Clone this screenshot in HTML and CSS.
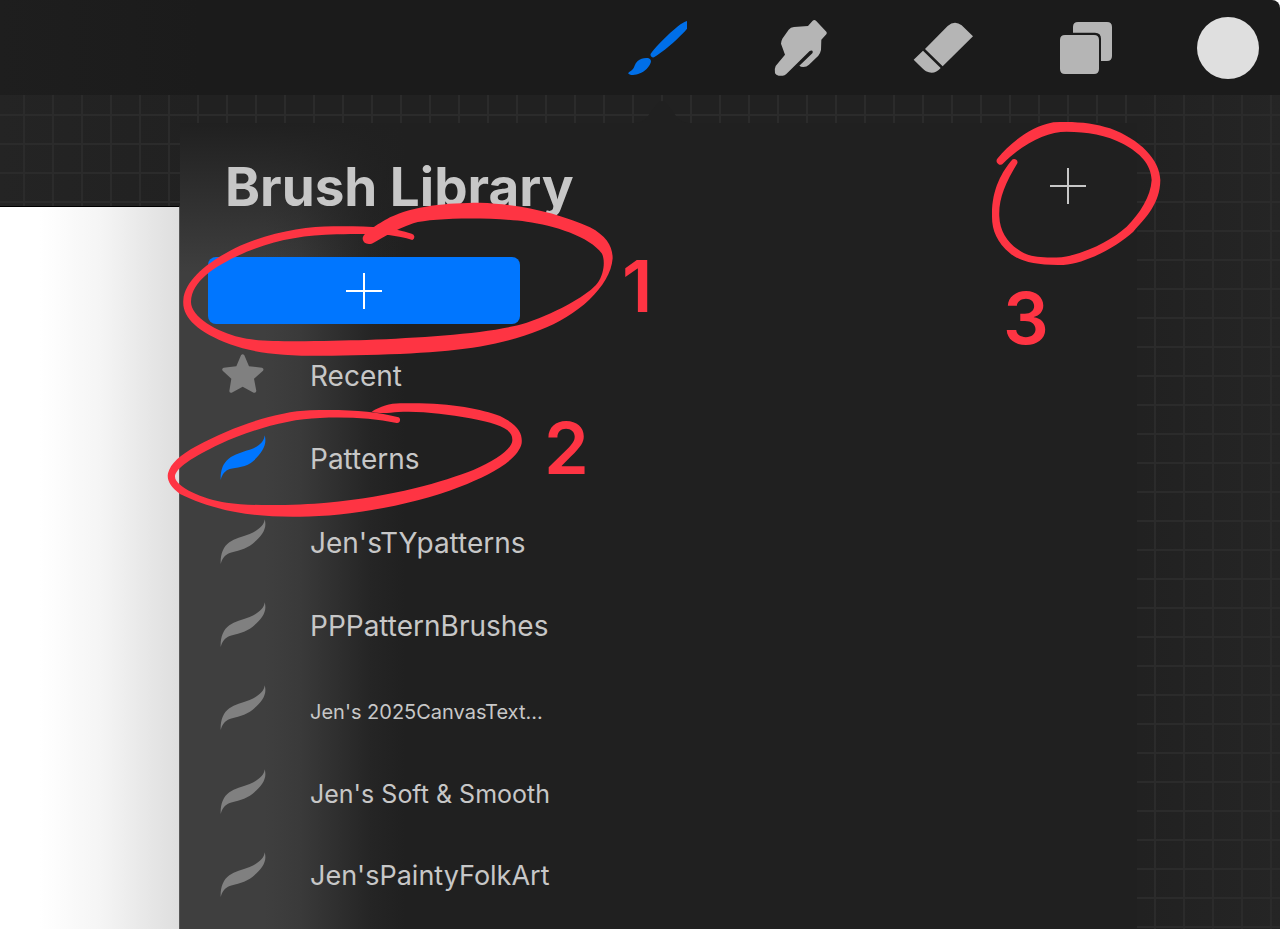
FILE: index.html
```html
<!DOCTYPE html>
<html lang="en">
<head>
<meta charset="utf-8">
<title>Brush Library</title>
<link rel="stylesheet" href="styles.css">
</head>
<body>
<svg class="defs" aria-hidden="true">
  <symbol id="stroke" viewBox="43 30 144 138">
    <path d="M180 31C179 48 162 64 135 75C112 83 90 89 74 100C56 113 47 135 48 165C53 147 61 138 75 132C95 126 123 121 144 104C173 81 188 58 180 31Z"/>
  </symbol>
  <symbol id="stroke-full" viewBox="43 30 144 138">
    <path d="M180 31C179 48 165 65 135 74C112 81 90 87 72 101C55 115 47 135 48 165C53 147 61 137 75 132C95 127 125 127 147 107C174 82 188 58 180 31Z"/>
  </symbol>
  <symbol id="plus" viewBox="0 0 36 36">
    <path d="M18 0V36M0 18H36" fill="none" stroke="currentColor" stroke-width="2"/>
  </symbol>
</svg>

<header class="toolbar">
  <button class="tool tool-active" aria-label="Paint">
    <svg viewBox="73 51 186 186"><path d="M266 62C270 72 262 84 250 97C222 126 188 155 160 172C152 173 148 168 150 161C170 134 203 102 230 80C246 68 258 62 266 62ZM140 174C148 175 153 180 150 188C145 202 133 213 118 220C104 226 90 226 83 221C82 217 89 215 94 210C103 202 101 192 111 183C119 176 130 173 140 174Z"/></svg>
  </button>
  <button class="tool" aria-label="Smudge">
    <svg viewBox="504 51 186 186"><path d="M638 62Q643 58 648 62L679 95Q682 99 679 103L664 119L663 150Q661 160 655 167L627 194Q620 201 610 201Q602 201 598 197L637 160Q640 155 637 152Q633 150 629 153L559 222Q554 227 548 227H536Q528 226 525 220Q522 208 527 198L555 164L543 131Q543 124 547 116L566 89Q572 82 582 81L624 78Z"/></svg>
  </button>
  <button class="tool" aria-label="Erase">
    <svg viewBox="93 51 186 186"><path d="M135 147L203 78Q224 59 245 76L279 109L188 199ZM129 152L182 204Q163 226 138 214Q132 210 101 179Z"/></svg>
  </button>
  <button class="tool" aria-label="Layers">
    <svg viewBox="522 51 186 186"><path d="M555 105H642Q657 105 657 120V207Q657 222 642 222H555Q540 222 540 207V120Q540 105 555 105ZM579 98V81Q579 66 594 66H681Q696 66 696 81V168Q696 183 681 183H663V116Q663 98 645 98Z"/></svg>
  </button>
  <button class="tool swatch" aria-label="Color"></button>
</header>

<main class="stage">
  <div class="paper"></div>
  <section class="library">
    <svg class="caret" viewBox="0 0 54 24" aria-hidden="true"><path d="M0 24Q8 24 13 17L23 4Q27 0 31 4L41 17Q46 24 54 24Z"/></svg>
    <div class="library-head">
      <h1>Brush Library</h1>
      <button class="add-brush" aria-label="New brush"><svg><use href="#plus"/></svg></button>
    </div>
    <button class="add-set" aria-label="New brush set"><svg><use href="#plus"/></svg></button>
    <ul class="sets">
      <li><button class="set"><svg class="star" viewBox="182 34 144 138"><path d="M248 44Q253 37 258 44L272 77L311 81Q318 84 314 90L287 114L294 151Q293 158 286 156L253 138L220 156Q213 158 213 151L219 114L193 90Q189 84 196 81L234 77Z"/></svg><span>Recent</span></button></li>
      <li><button class="set set-active"><svg><use href="#stroke-full"/></svg><span>Patterns</span></button></li>
      <li><button class="set"><svg><use href="#stroke"/></svg><span>Jen'sTYpatterns</span></button></li>
      <li><button class="set"><svg><use href="#stroke"/></svg><span>PPPatternBrushes</span></button></li>
      <li><button class="set set-small"><svg><use href="#stroke"/></svg><span>Jen's 2025CanvasText...</span></button></li>
      <li><button class="set set-medium"><svg><use href="#stroke"/></svg><span>Jen's Soft &amp; Smooth</span></button></li>
      <li><button class="set set-large"><svg><use href="#stroke"/></svg><span>Jen'sPaintyFolkArt</span></button></li>
    </ul>
  </section>
</main>

<svg class="marks marks-left" viewBox="0 0 660 560">
  <g transform="translate(160 130) scale(.33333)"><path d="M608 325C610 308 650 285 690 262C760 228 860 218 960 218C1080 222 1200 250 1290 292C1340 318 1358 350 1358 385C1352 470 1250 560 1140 600C1000 655 860 668 620 675C400 682 300 675 210 643C110 605 65 560 70 510C75 440 170 380 240 347C340 305 440 289 520 289C620 288 700 292 755 311A10 10 0 0 1 757 330C690 308 620 312 530 313C430 315 350 330 260 365C170 405 95 450 93 515C92 560 170 605 240 622C300 640 500 632 620 630C800 622 1000 610 1100 578C1200 545 1290 490 1312 460C1335 430 1335 385 1325 370C1290 320 1180 285 1100 275C1000 262 820 262 760 280C700 300 660 330 635 341C620 345 608 338 608 325Z"/></g>
  <g transform="translate(160 340) scale(.33333)"><path d="M635 215C660 200 690 190 720 190C860 186 960 205 1020 228C1075 255 1088 280 1085 310C1075 360 990 405 900 440C760 495 560 530 420 530C240 533 140 500 60 462C30 440 20 420 24 400C32 370 60 345 110 318C220 258 350 215 450 211C560 207 650 215 712 231A9 9 0 0 1 710 249C640 235 560 230 480 234C380 236 260 275 180 312C100 350 45 385 45 410C45 440 130 478 200 488C280 500 420 495 500 488C700 470 850 425 940 390C1010 360 1058 325 1057 300C1058 265 1010 250 930 235C860 222 780 212 715 216C690 218 660 222 635 215Z"/></g>
  <text x="622" y="312">1</text>
  <text x="544" y="474">2</text>
</svg>
<svg class="marks marks-right" viewBox="960 0 320 400">
  <g transform="translate(960 100) scale(.33333)"><path d="M113 175C150 130 210 80 280 67C340 63 400 68 450 85C540 118 600 180 601 240C600 310 560 350 520 395C470 440 380 490 310 495C230 497 180 485 150 460C110 425 95 390 96 345C95 270 125 215 158 178A10 10 0 0 1 172 190C135 250 115 300 118 350C120 400 150 440 200 463C230 475 300 475 330 467C410 445 460 415 500 380C540 340 572 290 575 240C572 190 540 160 490 132C440 105 380 95 320 95C260 95 190 130 130 190A11 11 0 0 1 113 175Z"/></g>
  <text x="1003" y="344">3</text>
</svg>
</body>
</html>
```
FILE: styles.css
```css
* {
  box-sizing: border-box;
}

body {
  margin: 0;
  min-height: 100vh;
  display: flex;
  flex-direction: column;
  position: relative;
  overflow-x: hidden;
  background: #fff;
  font-family: Inter, "Liberation Sans", sans-serif;
  color: #c7c7c7;
}

button {
  padding: 0;
  border: 0;
  background: none;
  color: inherit;
  font: inherit;
  cursor: pointer;
}

svg {
  display: block;
  fill: currentColor;
}

.defs {
  position: absolute;
  width: 0;
  height: 0;
}

.toolbar {
  display: flex;
  justify-content: flex-end;
  gap: 81px;
  height: 95px;
  padding: 17px 21px 0;
  background: linear-gradient(90deg, #1e1e1e, #1b1b1b 200px);
  border-top-right-radius: 8px;
}

.tool {
  width: 62px;
  height: 62px;
  color: #b5b5b5;
}

.tool-active {
  color: #006fe8;
}

.swatch {
  border-radius: 50%;
  background: #dfdfdf;
}

.stage {
  flex: 1;
  display: flex;
  padding-right: 143px;
  background:
    repeating-linear-gradient(90deg, #2b2b2b 0 2px, transparent 2px 29px),
    repeating-linear-gradient(180deg, #2b2b2b 0 2px, transparent 2px 29px),
    linear-gradient(90deg, #242424, #212121 200px, #212121 calc(100% - 140px), #252525);
  background-size: calc(100% + 29px) 100%, 100% calc(100% + 29px), 100% 100%;
  background-position: -6px 0, 0 -10px, 0 0;
  background-repeat: no-repeat;
}

.paper {
  width: 180px;
  margin-top: 111px;
  border-top: 1px solid #000;
  border-right: 1px solid #555;
  background: linear-gradient(90deg, #fff 40px, #f5f5f5 100px, #dedede);
}

.library {
  flex: 1;
  position: relative;
  display: flex;
  flex-direction: column;
  margin-top: 28px;
  padding: 28px 45px 12px 28px;
  background:
    linear-gradient(180deg, #202020, transparent 150px),
    linear-gradient(90deg, #3f3f3f 85px, #3a3a3a 120px, #252525 190px, #202020 225px);
}

.caret {
  position: absolute;
  left: 455px;
  top: -24px;
  width: 54px;
  height: 24px;
  color: #202020;
}

.library-head {
  display: flex;
  justify-content: space-between;
  padding-left: 17px;
}

h1 {
  margin: 0;
  font-size: 53px;
  line-height: 72px;
  font-weight: 700;
}

.add-brush {
  width: 42px;
  height: 70px;
}

.add-brush svg,
.add-set svg {
  width: 36px;
  height: 36px;
}

.add-set {
  display: grid;
  place-items: center;
  width: 312px;
  height: 67px;
  margin-top: 34px;
  border-radius: 8px;
  background: #0076ff;
  color: #fff;
}

.sets {
  flex: 1;
  display: flex;
  flex-direction: column;
  list-style: none;
  margin: 9px 0 0;
  padding: 0;
}

.sets li {
  flex: 1;
  display: flex;
}

.set {
  display: flex;
  align-items: center;
  gap: 43px;
  padding-left: 11px;
  font-size: 28px;
  line-height: 34px;
  text-align: left;
  white-space: nowrap;
}

.set svg {
  width: 48px;
  height: 46px;
  color: #808080;
}

.set-active svg {
  color: #0076ff;
}

.set span {
  padding-top: 2px;
}

.set-small {
  font-size: 20px;
}

.set-small span {
  padding-top: 8px;
}

.set-medium {
  font-size: 25px;
}

.set-medium span {
  padding-top: 4px;
}

.set-large {
  font-size: 27px;
}

.marks {
  position: absolute;
  top: 0;
  color: #fe3443;
  pointer-events: none;
}

.marks-left {
  left: 0;
  width: 660px;
  height: 560px;
}

.marks-right {
  right: 0;
  width: 320px;
  height: 400px;
}

.marks text {
  font-family: Inter, sans-serif;
  font-size: 72px;
  font-weight: 600;
}
```
